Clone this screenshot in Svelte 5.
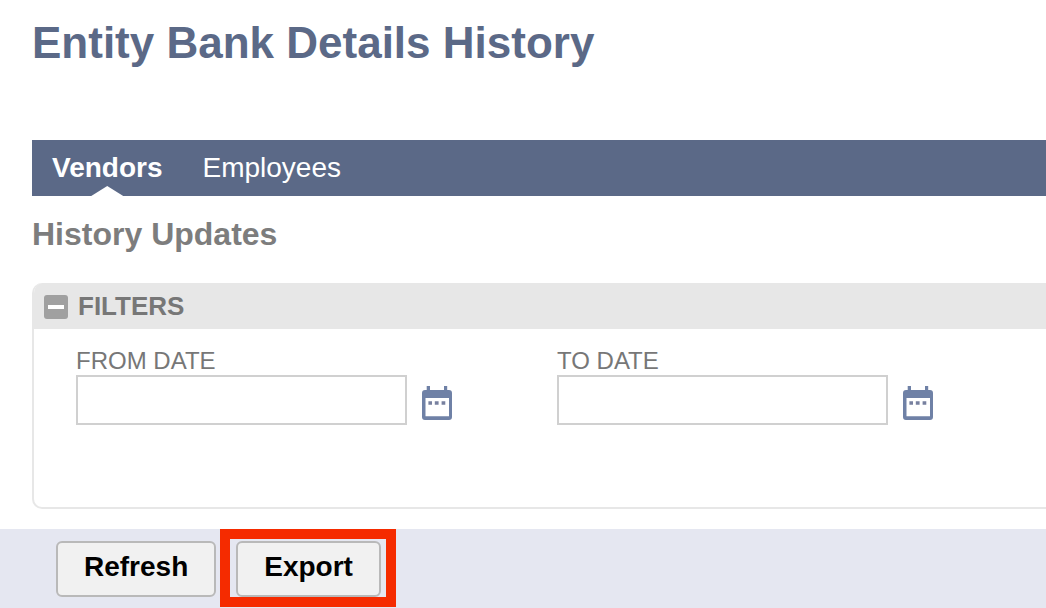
<script>
  const tabs = ['Vendors', 'Employees'];
  let active = $state('Vendors');
  let open = $state(true);
  let dates = $state({ from: '', to: '' });
  const fields = [
    { key: 'from', label: 'FROM DATE' },
    { key: 'to', label: 'TO DATE' }
  ];
</script>

<main>
  <h1>Entity Bank Details History</h1>

  <nav>
    {#each tabs as tab}
      <a href="#{tab}" class:active={active === tab} onclick={() => (active = tab)}>{tab}</a>
    {/each}
  </nav>

  <h2>History Updates</h2>

  <section class="panel">
    <header>
      <button class="toggle" aria-label="Toggle filters" aria-expanded={open} onclick={() => (open = !open)}>
        <svg viewBox="0 0 24 24" width="24" height="24">
          <rect width="24" height="24" rx="3" fill="#a0a0a0" />
          <rect x="4" y="10" width="16" height="4" fill="#fff" />
        </svg>
      </button>
      <h3>FILTERS</h3>
    </header>
    {#if open}
      <div class="filters">
        {#each fields as field}
          <div class="field">
            <label for={field.key}>{field.label}</label>
            <div class="entry">
              <input id={field.key} type="text" bind:value={dates[field.key]} />
              <button class="calendar" aria-label="Pick a date">
                <svg viewBox="0 0 30 34" width="30" height="34">
                  <path
                    fill="#6f81a6"
                    fill-rule="evenodd"
                    d="M4.7 0H8v4h14V0h3.2v4H27a3 3 0 0 1 3 3v24a3 3 0 0 1-3 3H3a3 3 0 0 1-3-3V7a3 3 0 0 1 3-3h1.7zM3.5 12v18.3H27V12z"
                  />
                  <path fill="#77809f" d="M6.4 15.3h3.6v3.4H6.4zM12.8 15.3h3.8v3.4h-3.8zM19.6 15.3h3.7v3.4h-3.7z" />
                </svg>
              </button>
            </div>
          </div>
        {/each}
      </div>
    {/if}
  </section>
</main>

<footer>
  <button class="action">Refresh</button>
  <div class="highlight">
    <button class="action">Export</button>
  </div>
</footer>

<style>
  :global(body) {
    background: #fff;
    font-family: 'Liberation Sans', Arial, sans-serif;
    color: #777;
  }

  * {
    box-sizing: border-box;
  }

  main {
    padding: 15px 0 20px 32px;
  }

  h1,
  h2,
  h3 {
    margin: 0;
    font-weight: bold;
  }

  h1 {
    margin-bottom: 69px;
    font-size: 44px;
    line-height: 56px;
    color: #5b6987;
  }

  nav {
    display: flex;
    gap: 40px;
    padding: 0 20px;
    background: #5b6987;
  }

  nav a {
    position: relative;
    font-size: 28px;
    line-height: 56px;
    color: #fff;
    text-decoration: none;
  }

  nav a.active {
    font-weight: bold;
  }

  nav a.active::after {
    content: '';
    position: absolute;
    bottom: 0;
    left: calc(50% - 16px);
    width: 32px;
    height: 10px;
    background: #fff;
    clip-path: polygon(50% 0, 100% 100%, 0 100%);
  }

  h2 {
    padding: 18px 0 29px;
    font-size: 32px;
    line-height: 40px;
    color: #7d7d7d;
  }

  .panel {
    border: 2px solid #e7e7e7;
    border-width: 0 0 2px 2px;
    border-radius: 10px 0 0 10px;
    overflow: hidden;
  }

  .panel header {
    display: flex;
    align-items: center;
    gap: 10px;
    padding: 0 10px;
    background: #e7e7e7;
  }

  h3 {
    font-size: 26px;
    line-height: 46px;
  }

  button {
    font-family: inherit;
    cursor: pointer;
  }

  .toggle,
  .calendar {
    display: flex;
    padding: 0;
    border: 0;
    background: none;
  }

  .toggle {
    padding-top: 2px;
  }

  .filters {
    display: grid;
    grid-template-columns: repeat(2, minmax(0, 1fr));
    padding: 18px 8px 82px 42px;
  }

  .field {
    padding-right: 105px;
  }

  label {
    display: block;
    font-size: 24px;
    line-height: 28px;
  }

  .entry {
    display: flex;
    align-items: center;
    gap: 15px;
  }

  input {
    flex: 1;
    min-width: 0;
    height: 50px;
    padding: 0 10px;
    border: 2px solid #d0d0d0;
    background: #fff;
    font: inherit;
    font-size: 24px;
  }

  .calendar {
    padding-top: 6px;
  }

  footer {
    display: flex;
    gap: 20px;
    padding: 12px 56px 11px;
    background: #e5e7f1;
  }

  .action {
    display: block;
    padding: 8px 26px 12px;
    border: 2px solid #b9b9b9;
    border-radius: 6px;
    background: #f1f1f1;
    font-size: 28px;
    font-weight: bold;
    line-height: 32px;
    color: #000;
  }

  .highlight {
    position: relative;
  }

  .highlight::after {
    content: '';
    position: absolute;
    inset: -12px -15px -10px -16px;
    border: 10px solid #f52b00;
    pointer-events: none;
  }
</style>
